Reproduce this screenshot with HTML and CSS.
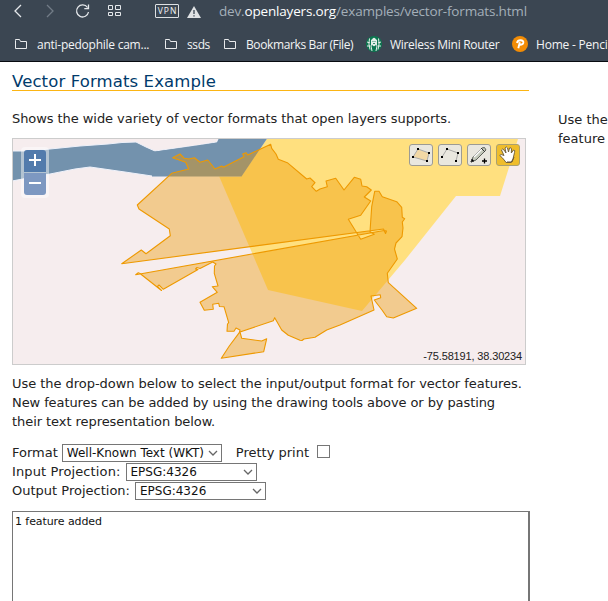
FILE: index.html
```
<!DOCTYPE html>
<html lang="en">
<head>
<meta charset="utf-8">
<title>Vector Formats Example</title>
<link rel="stylesheet" href="styles.css">
</head>
<body>
<header class="browser">
  <div class="toolbar">
    <svg class="nav" width="124" height="24" viewBox="0 0 124 24" fill="none" stroke="#e5e8eb" stroke-width="1.3">
      <path d="M21 5l-6 6 6 6"/>
      <path d="M47 5l6 6-6 6" stroke="#727c87"/>
      <path d="M87.500 7.500A6 6 0 1 0 88.500 12M88.500 4.500v4.200h-4.200"/>
      <path d="M108.500 5.500h4v4h-4zM115.500 5.500h5v4h-5zM108.500 12.500h4v3h-4zM115.500 12.500h5v3h-5z" stroke-width="1"/>
    </svg>
    <span class="vpn">VPN</span>
    <svg class="warn" width="14" height="12" viewBox="0 0 14 12"><path d="M7 0l7 12H0z" fill="#dfe2e4"/><path d="M7 4v4M7 9.300v1.200" stroke="#3b4652" stroke-width="1.300"/></svg>
    <span class="url">dev.<b>openlayers.org</b>/examples/vector-formats.html</span>
  </div>
  <nav class="bookmarks">
    <svg class="folder" viewBox="0 0 12 10"><path d="M.5 1.500v8h11V2.500H5.500L4.500.5h-4z"/></svg><span class="bm b1">anti-pedophile cam...</span>
    <svg class="folder" viewBox="0 0 12 10"><path d="M.5 1.500v8h11V2.500H5.500L4.500.5h-4z"/></svg><span class="bm b2">ssds</span>
    <svg class="folder" viewBox="0 0 12 10"><path d="M.5 1.500v8h11V2.500H5.500L4.500.5h-4z"/></svg><span class="bm b3">Bookmarks Bar (File)</span>
    <svg class="badge" viewBox="0 0 16 16"><circle cx="8" cy="8" r="8" fill="#0c7650"/><g fill="none" stroke="#e5efe9"><path d="M3.500 2.500q-1.500 5 .5 11M12.500 2.500q1.500 5-.5 11M6 7Q4 9 6 15M10 7q2 2 0 8M1 6l3 1M15 6l-3 1M1 10l3 0M15 10h-3"/><path d="M5.500 4l2.500-2 2.500 2v4L8 10 5.500 8z" fill="#e5efe9"/></g><path d="M6.500 5.500h1M8.500 5.500h1M7 7.500h2" stroke="#0c7650" stroke-width=".8"/></svg><span class="bm b4">Wireless Mini Router</span>
    <svg class="badge" viewBox="0 0 16 16"><circle cx="8" cy="8" r="8" fill="#f28c05"/><path d="M5 7Q5.500 4.300 8.500 4.300q3.300 0 2.800 2.500Q10.800 8.900 7.800 8.800M7.800 6.300L6.300 12.200" fill="none" stroke="#fff" stroke-width="1.900"/></svg><span class="bm b5">Home - Penci</span>
  </nav>
</header>
<div class="page">
  <main>
    <h1>Vector Formats Example</h1>
    <p class="intro">Shows the wide variety of vector formats that open layers supports.</p>
    <div class="map">
      <svg class="canvas" width="512" height="225" viewBox="13 139 512 225">
        <path fill="#f6edee" d="M13 139h512v225H13z"/>
        <path fill="#ffe07f" d="M230 139H518L500 196H456L405 260L362 311L268 290L219 176z"/>
        <path fill="#7392ad" stroke="#eef1fa" stroke-width="1" d="M12 151H28L50 149L80 146L108 144L122 142.500L136 142L146 147L155 151L200 145L217 142L219 138H267L241 176H152L125 172L90 167L75 169L50 174L12 181z"/>
        <path fill="#7392ad" d="M219 138H267.500L241.500 176.500H152V152L217 142.500z"/>
        <path fill="#ee9900" fill-opacity=".4" stroke="#ee9900" stroke-width="1.100" stroke-linejoin="round" d="M172.700 157.700L180 154L184.300 158.300L189 159L194.300 157.700L200 162.300L207.700 160L215 169L221.700 166L223.300 167.300L244 156.700L242.700 154L246 152.700L247.700 155L270.700 144.300L271.700 148.300L276 154L278.300 159.300L287.300 162.700L306.700 179L310 178L315 182.700L311.700 186.700L316.300 191.300L320 189L327.300 186.700L326 181L335.700 178.300L344 190L354.300 177.300L360.700 179.300L362 186L366.700 186.700L371.300 190L364.300 197L370.700 201L360.700 215.300L348.300 219.300L360.700 239.300L374.300 234.300L370 231.700L371.700 206.700L374.700 191.300L379 191.300L382.300 196.700L396.700 201.700L401.700 207.300L402.300 217.300L404.700 218.700L402.300 222L403 228L402 236.700L396 243L394.500 249L397.300 259L387.300 273.300L388.300 282.700L416.700 308.300L393.300 318L386.700 316.700L382 310L374.300 300L380.700 297.700L380.300 294.700L371 296L374 310L340 325L326.700 330L315 337.300L304 339L302 340.500L300 340.300L288.300 335.300L281.700 330L274.700 317.700L273.300 320.700L240 332L241.700 338.300L261.700 341L266.700 338.700L263.700 351.700L221.300 358.300L229.300 346L239.300 332.700L240 330L236 328L234 331.300H227L227.500 324L228.700 322.700L224 306.700L219.500 306.500L218.700 303.300L212.700 304.300L213.300 309.300L204.300 310.300L200 302.300L217.300 292.300L212.300 286.700L218 286L214.300 273.300L214.500 266L216 264L212.700 262L200 268.500L197 267.500L195.500 269L198 269.500L163.300 289.300L159 285L157.500 286.500L161.500 290.500L140 273.500L138.300 272.700L135.700 274.700L384 230.500L386.500 231L385.500 233.500L383.500 229L121.700 263.700L141.300 250L146 253.700L170.300 235.700L169.300 229L139 209L137.300 205L171.700 173.300L188.700 169L185.700 162.300z"/>
      </svg>
      <div class="zoom"><span class="in"></span><span class="out"></span></div>
      <div class="tools">
        <span class="tool"><svg viewBox="0 0 24 22"><path d="M9 5l11 4-2 8-14-4z" fill="#f2d8a5" stroke="#aaa"/><path d="M8 4h2v2h-2zM19 8h2v2h-2zM17 16h2v2h-2zM3 12h2v2h-2z"/></svg></span>
        <span class="tool"><svg viewBox="0 0 24 22"><path d="M4 13L9 5l11 4-2 8" fill="none" stroke="#999" stroke-width=".8"/><path d="M8 4h2v2h-2zM19 8h2v2h-2zM17 16h2v2h-2zM3 12h2v2h-2z"/></svg></span>
        <span class="tool"><svg viewBox="0 0 24 22"><path d="M4 18l2-5 9-9q3-2 4 2L9 16z" fill="#c4c9bb" stroke="#5e625a"/><path d="M7 13l8-8" stroke="#fff" stroke-width="1.500"/><path d="M4 18l1-3 2 2zM14 4l4 4" stroke="#333"/><path d="M15 17h5M17.500 14.500v5" stroke="#000" stroke-width="1.300"/></svg></span>
        <span class="tool active"><svg viewBox="0 0 24 22"><path d="M9 17Q6 13 3.700 11.500Q4.500 9.500 8 11.500L5.500 6Q6.500 4 8 6L10 9L9 4Q10.500 2 11.500 4L12.500 8L13.500 4Q15 3 15.500 5L15.300 9L17.500 6Q19.500 6 18.500 8.500L17 15L15 18.500H10z" fill="#fff" stroke="#665739" stroke-width=".9"/><path d="M11 18h5l2-5" fill="none" stroke="#665739"/></svg></span>
      </div>
      <span class="position">-75.58191, 38.30234</span>
    </div>
    <p class="help"><span class="l1">Use the drop-down below to select the input/output format for vector features.</span><br><span class="l2">New features can be added by using the drawing tools above or by pasting</span><br><span class="l3">their text representation below.</span></p>
    <form>
      <div class="row"><label for="fmt">Format</label><span class="select wide"><select id="fmt"><option>Well-Known Text (WKT)</option></select><svg viewBox="0 0 10 6"><path d="M1 1l4 4 4-4"/></svg></span><label class="pretty" for="pp">Pretty print</label><input id="pp" type="checkbox"></div>
      <div class="row"><label class="ip" for="ip">Input Projection:</label><span class="select"><select id="ip"><option>EPSG:4326</option></select><svg viewBox="0 0 10 6"><path d="M1 1l4 4 4-4"/></svg></span></div>
      <div class="row"><label for="op">Output Projection:</label><span class="select"><select id="op"><option>EPSG:4326</option></select><svg viewBox="0 0 10 6"><path d="M1 1l4 4 4-4"/></svg></span></div>
    </form>
    <div class="status">1 feature added</div>
  </main>
  <aside>Use the<br>feature</aside>
</div>
</body>
</html>
```
FILE: styles.css
```
* { box-sizing: border-box; }
html, body { height: 100%; }
body { margin: 0; overflow: hidden; background: #fff; color: #222; font: 13px/19px "DejaVu Sans", Verdana, sans-serif; }
.browser { height: 62px; background: #3b4652; border-bottom: 1px solid #080b10; font-family: "Open Sans", "Noto Sans", sans-serif; color: #f3f4f5; overflow: hidden; white-space: nowrap; }
.toolbar { display: flex; align-items: center; height: 24px; }
.nav { flex: none; }
.vpn { width: 24px; height: 14px; margin-left: 31px; border: 1px solid #dde0e3; border-radius: 1px; font-size: 8.5px; line-height: 12px; letter-spacing: 1px; text-align: center; padding-left: 1px; position: relative; top: -1px; }
.warn { margin: 0 18px 0 8px; flex: none; }
.url { font-size: 13.5px; color: #a4afb9; letter-spacing: -.17px; position: relative; top: -1px; }
.url b { font-weight: 400; color: #fff; }
.bookmarks { display: flex; align-items: center; height: 37px; padding: 3px 0 0 15px; font-size: 12px; }
.bm { flex: none; margin-left: 10px; }
.folder { width: 12px; height: 10px; flex: none; fill: none; stroke: #e8eaec; }
.badge { width: 16px; height: 16px; flex: none; }
.badge + .bm { margin-left: 8px; }
.b1 { width: 128px; letter-spacing: -.25px; }
.b2 { width: 37px; letter-spacing: -.4px; }
.b3 { width: 120px; letter-spacing: -.38px; }
.b4 { width: 122px; letter-spacing: -.3px; }
.b5 { letter-spacing: -.22px; }
.page { display: flex; }
main { width: 518px; margin-left: 12px; flex: none; }
h1 { margin: 10px 0 0; width: 517px; height: 19px; border-bottom: 1px solid #fcb514; font-size: 16.5px; line-height: 19px; letter-spacing: .12px; font-weight: 400; color: #003a6b; white-space: nowrap; }
p { margin: 0; white-space: nowrap; }
.intro { margin-top: 18px; height: 29px; letter-spacing: -.065px; }
.map { position: relative; width: 514px; height: 227px; border: 1px solid #ccc; }
.canvas { display: block; }
.zoom { position: absolute; left: 8px; top: 8px; width: 28px; height: 51px; padding: 3px; border-radius: 4px; background: rgba(255,255,255,.45); display: grid; grid-template-rows: 22px 22px; gap: 1px; }
.in, .out { display: grid; place-items: center; border-radius: 3px 3px 0 0; background: #527bac; }
.out { background: #7d98c1; border-radius: 0 0 3px 3px; }
.in::before, .in::after, .out::before { content: ""; grid-area: 1 / 1; width: 12px; height: 2px; background: #fff; }
.in::after { width: 2px; height: 12px; }
.in::before, .in::after { margin-bottom: 2px; }
.out::before { margin-bottom: 2px; }
.tools { position: absolute; left: 396px; top: 5px; display: flex; gap: 5px; }
.tool { width: 24px; height: 22px; border: 1px solid #9c9b94; border-radius: 3px; background: #e9e7df; }
.tool svg { display: block; width: 24px; height: 22px; margin: -1px; }
.active { background: #efbd2b; border-color: #aaa071; }
.position { position: absolute; right: 3px; bottom: 0; font: 11px/16px "Liberation Sans", Arial, sans-serif; letter-spacing: -.15px; color: #222; }
.help { margin-top: 9px; height: 57px; }
.l1 { letter-spacing: -.04px; }
.l2 { letter-spacing: -.09px; }
.l3 { letter-spacing: -.06px; }
form { margin-top: 12px; }
.row { display: flex; height: 19px; align-items: center; white-space: nowrap; }
.select { display: inline-grid; align-items: center; width: 131px; height: 18px; margin-left: 5px; border: 1px solid #767676; }
.select.wide { width: 160px; margin-left: 4px; }
.ip { letter-spacing: .12px; }
.select select, .select svg { grid-area: 1 / 1; }
.select svg { width: 10px; height: 6px; justify-self: end; margin-right: 3px; fill: none; stroke: #666; stroke-width: 1.300; }
select { appearance: none; width: 100%; height: 16px; border: 0; padding: 0 4px; background: none; color: #111; font: 12px/16px "DejaVu Sans", Verdana, sans-serif; }
.pretty { margin-left: 14px; }
#pp { appearance: none; width: 13px; height: 13px; margin: -3px 0 0 8px; border: 1px solid #767676; }
.status { margin-top: 11px; height: 95px; border: 1px solid #767676; border-right-width: 2px; border-bottom: 0; padding: 2px; font-size: 11px; line-height: 15px; letter-spacing: -.08px; color: #111; }
aside { margin: 48px 0 0 28px; white-space: nowrap; }
```
